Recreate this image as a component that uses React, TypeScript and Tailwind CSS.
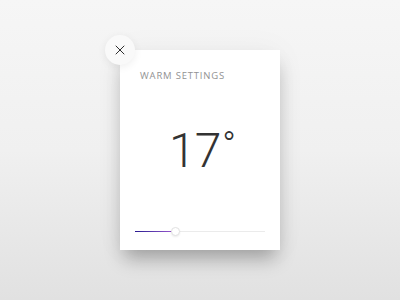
import { X } from 'lucide-react';

export default function App() {
    const value = 17;
    const pct = 31;

    return (
        <div className="w-[400px] h-[300px] overflow-hidden bg-gradient-to-b from-[#f6f6f6] via-[#f0f0f0] to-[#e1e1e1] pt-[50px] pl-[120px]" style={{ fontFamily: '"Open Sans", "Liberation Sans", sans-serif' }}>
            <div className="relative w-[160px] h-[200px] bg-white shadow-[0_12px_18px_-4px_rgba(0,0,0,0.3),0_0_30px_rgba(0,0,0,0.04)]">
                <button className="absolute -left-[15px] -top-[15px] w-[30px] h-[30px] rounded-full bg-[#f9f9f9] shadow-[0_2px_8px_rgba(0,0,0,0.07)] flex items-center justify-center text-[#2e2e2e]">
                    <X className="w-[16px] h-[16px]" strokeWidth={1.5} />
                </button>

                <div className="pt-[20px] px-5 text-[9.5px] leading-[12px] tracking-[0.8px] text-[#929292]">
                    WARM SETTINGS
                </div>

                <div className="mt-[45px] text-center text-[48px] leading-none font-light tracking-[-1px] text-[#333] pl-[4px]" style={{ fontFamily: 'Roboto, "Open Sans", sans-serif' }}>
                    {value}<span className="text-[36px] align-[9px] ml-[2px]">°</span>
                </div>

                <div className="mt-[51px] mx-[15px] h-[10px] relative flex items-center">
                    <div className="w-full h-px bg-[#ebebeb]" />
                    <div className="absolute left-0 h-px bg-gradient-to-r from-[#2a1890] to-[#a05ad2]" style={{ width: `${pct}%` }} />
                    <div className="absolute w-[9px] h-[9px] -ml-[4px] rounded-full bg-white border border-[#e2e2e2] shadow-[0_1px_2px_rgba(0,0,0,0.08)]" style={{ left: `${pct}%` }} />
                </div>
            </div>
        </div>
    );
}
